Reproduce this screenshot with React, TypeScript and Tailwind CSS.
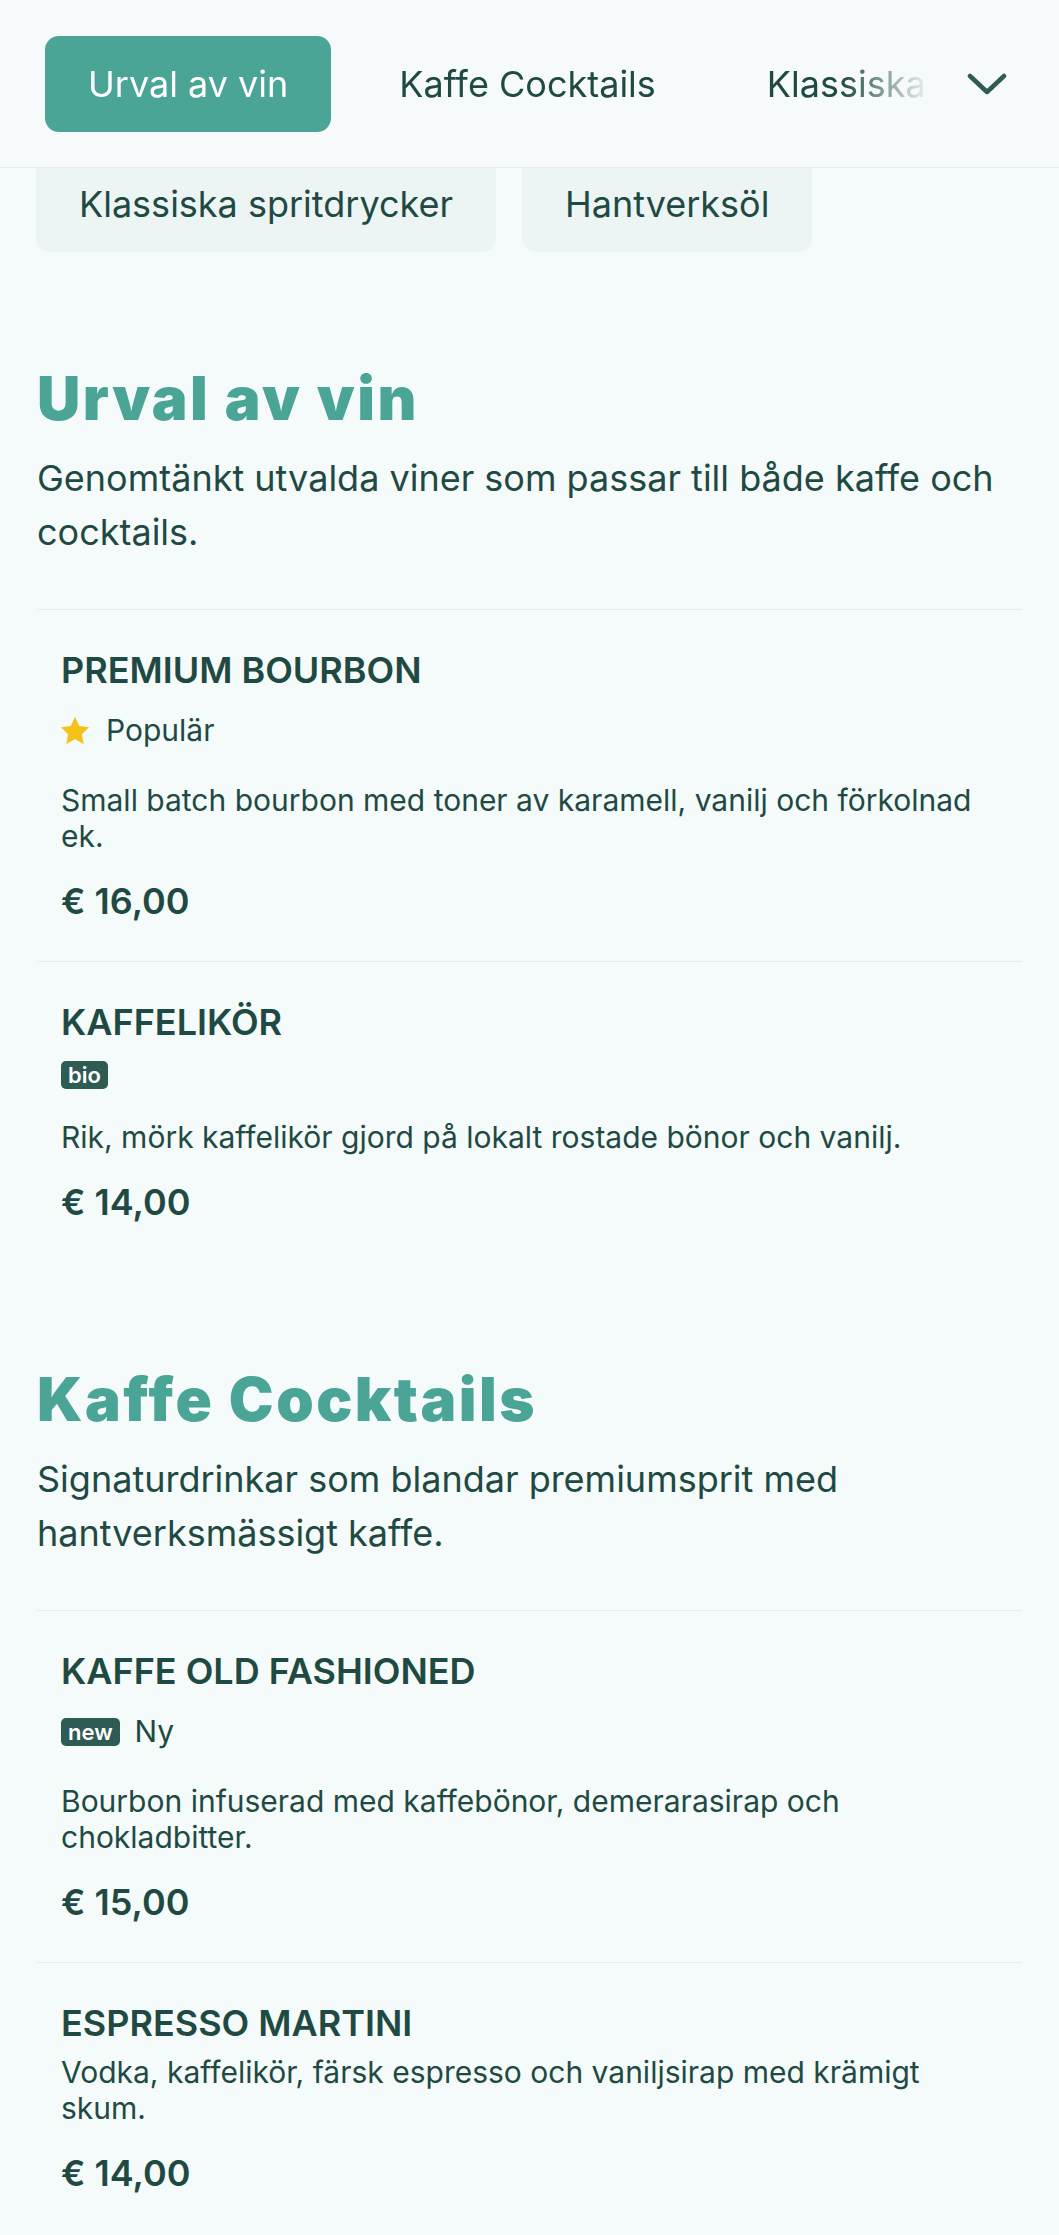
import { ReactNode } from 'react';

type Item = {
  name: string;
  description: string;
  price: string;
  badge?: string;
  label?: string;
  popular?: boolean;
};

type Section = {
  title: string;
  intro: string;
  items: Item[];
};

const tabs = ['Urval av vin', 'Kaffe Cocktails', 'Klassiska spritdrycker', 'Hantverksöl'];

const sections: Section[] = [
  {
    title: 'Urval av vin',
    intro: 'Genomtänkt utvalda viner som passar till både kaffe och cocktails.',
    items: [
      {
        name: 'PREMIUM BOURBON',
        popular: true,
        label: 'Populär',
        description: 'Small batch bourbon med toner av karamell, vanilj och förkolnad ek.',
        price: '€ 16,00',
      },
      {
        name: 'KAFFELIKÖR',
        badge: 'bio',
        description: 'Rik, mörk kaffelikör gjord på lokalt rostade bönor och vanilj.',
        price: '€ 14,00',
      },
    ],
  },
  {
    title: 'Kaffe Cocktails',
    intro: 'Signaturdrinkar som blandar premiumsprit med hantverksmässigt kaffe.',
    items: [
      {
        name: 'KAFFE OLD FASHIONED',
        badge: 'new',
        label: 'Ny',
        description: 'Bourbon infuserad med kaffebönor, demerarasirap och chokladbitter.',
        price: '€ 15,00',
      },
      {
        name: 'ESPRESSO MARTINI',
        description: 'Vodka, kaffelikör, färsk espresso och vaniljsirap med krämigt skum.',
        price: '€ 14,00',
      },
    ],
  },
];

const Star = () => (
  <svg width="32" height="30" viewBox="0 0 24 23" className="-ml-[2px] shrink-0">
    <path
      d="M12 0.8l3.3 6.9 7.5 1-5.5 5.2 1.4 7.5L12 17.8l-6.7 3.6 1.4-7.5L1.2 8.7l7.5-1z"
      fill="#f5c21b"
    />
  </svg>
);

const Badge = ({ children }: { children: ReactNode }) => (
  <span className="flex h-[28px] items-center rounded-[5px] bg-[#2e5b54] px-[7px] text-[22px] font-semibold leading-none text-white">
    {children}
  </span>
);

const MenuItem = ({ item }: { item: Item }) => {
  const hasTags = item.popular || item.badge || item.label;
  return (
    <div className="border-t border-[#e3eeec] px-[24px] pt-[38px] pb-[38px]">
      <h3 className="text-[36px] font-semibold leading-[44px]">{item.name}</h3>
      {hasTags && (
        <div className="mt-[17px] flex items-center gap-[15px]">
          {item.popular && <Star />}
          {item.badge && <Badge>{item.badge}</Badge>}
          {item.label && <span className="text-[30px] leading-[43px]">{item.label}</span>}
        </div>
      )}
      <p className={`${hasTags ? 'mt-[30px]' : 'mt-[9px]'} text-[30px] leading-[36px]`}>
        {item.description}
      </p>
      <div className="mt-[25px] text-[36px] font-semibold leading-[44px]">{item.price}</div>
    </div>
  );
};

const App = () => {
  return (
    <div className="min-h-screen bg-[#f5fafa] font-['Inter',_sans-serif] text-[#1f4a43]">
      <header className="relative z-10 flex h-[168px] items-center border-b border-[#e3eeec] bg-[#f6fafa] pl-[45px] pr-[52px]">
        <nav className="flex min-w-0 flex-1 gap-[25px] overflow-hidden [mask-image:linear-gradient(to_right,black_89%,transparent_99%)]">
          {tabs.map((tab, i) => (
            <span
              key={tab}
              className={`flex h-[96px] shrink-0 items-center whitespace-nowrap rounded-[14px] px-[43px] text-[36px] ${
                i === 0 ? 'bg-[#4aa597] text-white' : ''
              }`}
            >
              {tab}
            </span>
          ))}
        </nav>
        <svg width="40" height="22" viewBox="0 0 40 22" className="ml-[27px] shrink-0">
          <path
            d="M3 3l17 16L37 3"
            fill="none"
            stroke="#2e5b54"
            strokeWidth="4.5"
            strokeLinecap="round"
            strokeLinejoin="round"
          />
        </svg>
      </header>

      <div className="-mt-[12px] flex gap-[26px] px-[36px]">
        {tabs.slice(2).map((tab) => (
          <span
            key={tab}
            className="flex h-[96px] items-center whitespace-nowrap rounded-[14px] bg-[#edf5f4] px-[43px] text-[36px]"
          >
            {tab}
          </span>
        ))}
      </div>

      <main className="px-[37px] pt-[9px] pb-[40px]">
        {sections.map((section) => (
          <section key={section.title} className="mt-[101px]">
            <h2 className="text-[60px] font-black leading-[72px] tracking-[2.5px] text-[#4aa597]">
              {section.title}
            </h2>
            <p className="mt-[17px] text-[36px] leading-[54px]">{section.intro}</p>
            <div className="mt-[50px]">
              {section.items.map((item) => (
                <MenuItem key={item.name} item={item} />
              ))}
            </div>
          </section>
        ))}
      </main>
    </div>
  );
};

export default App;
